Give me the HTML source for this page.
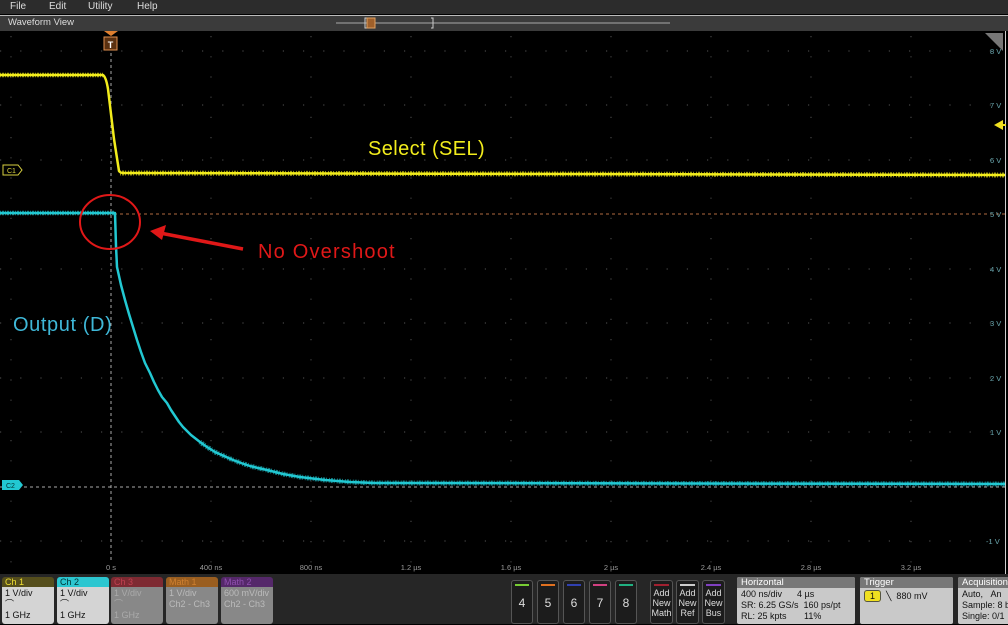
<!DOCTYPE html>
<html><head><meta charset="utf-8"><style>
*{margin:0;padding:0;box-sizing:border-box}
body{width:1008px;height:624px;overflow:hidden;background:#000;font-family:"Liberation Sans",sans-serif;position:relative}
.menu{position:absolute;left:0;top:0;width:1008px;height:14px;background:#2c2c2c;color:#ddd;font-size:10px}
.menu span{position:absolute;top:1px}
.wv{position:absolute;left:0;top:15px;width:1008px;height:16px;background:#3b3b3b;border-top:1px solid #bbb;color:#ddd;font-size:9.5px;padding:1px 8px}
.bot{position:absolute;left:0;top:574px;width:1008px;height:50px;background:#262626}
.ch{position:absolute;top:3px;width:52px;height:47px;border-radius:3px;overflow:hidden;font-size:9px}
.ch .h{height:10px;padding:0 3px;line-height:10px}
.ch .b{height:37px;padding:1px 3px;line-height:11px}
.nb{position:absolute;top:6px;width:22px;height:44px;background:#1c1c1c;border:1px solid #555;border-radius:3px;color:#ddd;font-size:12px;text-align:center;line-height:44px}
.nb i{position:absolute;left:3px;right:3px;top:3px;height:2px}
.ab{position:absolute;top:6px;width:23px;height:44px;background:#1c1c1c;border:1px solid #555;border-radius:3px;color:#ddd;font-size:9px;text-align:center;line-height:10px;padding-top:7px}
.ab i{position:absolute;left:3px;right:3px;top:3px;height:2px}
.pn{position:absolute;top:3px;height:47px;background:#c9c9c9;font-size:9px;color:#111;border-radius:2px;overflow:hidden}
.pn .h{background:#777;color:#fff;height:11px;padding:0 4px;line-height:11px;font-size:9.5px}
</style></head><body>
<div class="menu"><span style="left:10px">File</span><span style="left:49px">Edit</span><span style="left:88px">Utility</span><span style="left:137px">Help</span></div>
<div class="wv">Waveform View</div>
<svg style="position:absolute;left:0;top:15px" width="1008" height="16">
<line x1="336" y1="8" x2="670" y2="8" stroke="#aaa" stroke-width="1"/>
<path d="M367 3h-2v10h2M431 3h2v10h-2" stroke="#ccc" fill="none"/>
<rect x="367" y="3" width="8" height="10" fill="#a0602a" stroke="#e0a060"/>
</svg>
<svg style="position:absolute;left:0;top:31px" width="1008" height="543">
<rect x="0" y="0" width="1008" height="543" fill="#000"/>
<line x1="1005.5" y1="0" x2="1005.5" y2="543" stroke="#ccc"/>
<g stroke="#444" stroke-width="1.2" stroke-dasharray="1.2 19">
<line x1="11" y1="5" x2="11" y2="540"/><line x1="211" y1="5" x2="211" y2="540"/><line x1="311" y1="5" x2="311" y2="540"/><line x1="411" y1="5" x2="411" y2="540"/><line x1="511" y1="5" x2="511" y2="540"/><line x1="611" y1="5" x2="611" y2="540"/><line x1="711" y1="5" x2="711" y2="540"/><line x1="811" y1="5" x2="811" y2="540"/><line x1="911" y1="5" x2="911" y2="540"/>
<line x1="0" y1="20" x2="1005" y2="20"/><line x1="0" y1="74" x2="1005" y2="74"/><line x1="0" y1="129" x2="1005" y2="129"/><line x1="0" y1="238" x2="1005" y2="238"/><line x1="0" y1="292" x2="1005" y2="292"/><line x1="0" y1="347" x2="1005" y2="347"/><line x1="0" y1="401" x2="1005" y2="401"/><line x1="0" y1="510" x2="1005" y2="510"/>
</g>
<line x1="111" y1="10" x2="111" y2="530" stroke="#aaa" stroke-dasharray="3 3"/>
<line x1="0" y1="183" x2="1005" y2="183" stroke="#b06a40" stroke-dasharray="3 3"/>
<line x1="0" y1="456" x2="1005" y2="456" stroke="#aaa" stroke-dasharray="3 3"/>
<path d="M104 0l7 5l7-5z" fill="#e08030"/>
<rect x="104" y="6" width="13" height="13" fill="#5a3010" stroke="#e09050"/>
<text x="110.5" y="17" fill="#fff" font-size="9" text-anchor="middle" font-weight="bold">T</text>
<path d="M985 2h18v18z" fill="#777"/>
<g fill="#6aa8b0" font-size="7.5">
<text x="990" y="23">8 V</text><text x="990" y="77">7 V</text><text x="990" y="132">6 V</text><text x="990" y="186">5 V</text><text x="990" y="241">4 V</text><text x="990" y="295">3 V</text><text x="990" y="350">2 V</text><text x="990" y="404">1 V</text><text x="986" y="513">-1 V</text>
</g>
<path d="M1003 89l-9 5l9 5z" fill="#f0e020"/><line x1="1000" y1="94" x2="1006" y2="94" stroke="#f0e020" stroke-width="2"/>
<g fill="#999" font-size="7.5" text-anchor="middle">
<text x="111" y="539">0 s</text><text x="211" y="539">400 ns</text><text x="311" y="539">800 ns</text><text x="411" y="539">1.2 µs</text><text x="511" y="539">1.6 µs</text><text x="611" y="539">2 µs</text><text x="711" y="539">2.4 µs</text><text x="811" y="539">2.8 µs</text><text x="911" y="539">3.2 µs</text>
</g>
<path d="M0 44L103 44Q106 46 108 58L114 108L119 140Q120 142 124 142L1005 144" stroke="#f2ec1c" stroke-width="2.5" fill="none" stroke-linejoin="round"/>
<path d="M120 142L1005 144" stroke="#f2ec1c" stroke-width="5" fill="none" stroke-dasharray="1 1 2 1 1 2" opacity=".6"/>
<path d="M0 44L103 44" stroke="#f2ec1c" stroke-width="4.5" fill="none" stroke-dasharray="1 1 2 1" opacity=".6"/>
<polyline points="0,182 115,182 116,215 117,236 121,254 125,269 129,283 133,296 137,309 141,321 145,332 150,342 154,351 158,359 162,366 167,372 171,379 175,385 179,391 183,396 191,404 200,411 207,416 215,421 224,425 233,429 241,432 250,435 258,437 267,439 283,443 300,446 325,449 350,451 375,452 400,452 1005,453" stroke="#22c8d2" stroke-width="2.5" fill="none" stroke-linejoin="round"/>
<path d="M0 182L115 182" stroke="#22c8d2" stroke-width="4.5" fill="none" stroke-dasharray="1 1 2 1" opacity=".6"/>
<polyline points="200,411 207,416 215,421 224,425 233,429 241,432 250,435 258,437 267,439 283,443 300,446 325,449 350,451 375,452 400,452 1005,453" stroke="#22c8d2" stroke-width="5" fill="none" stroke-dasharray="1 1 2 1 1 2" opacity=".6"/>
<path d="M3 134h15l4 5l-4 5h-15z" fill="#000" stroke="#d8d040"/>
<text x="7" y="142" fill="#d8d040" font-size="7">C1</text>
<path d="M2 449h17l4 5l-4 5h-17z" fill="#22c8d2"/>
<text x="6" y="457" fill="#033" font-size="7">C2</text>
<ellipse cx="110" cy="191" rx="30" ry="27" fill="none" stroke="#e01818" stroke-width="2"/>
<path d="M243 218L160 202" stroke="#e01818" stroke-width="3.5"/>
<path d="M150 200L166 194L162 209z" fill="#e01818"/>
<text x="258" y="227" fill="#e01818" font-size="20" letter-spacing="1.2">No Overshoot</text>
<text x="368" y="124" fill="#f2ec1c" font-size="20" letter-spacing="0.4">Select (SEL)</text>
<text x="13" y="300" fill="#3fb8d8" font-size="20" letter-spacing="0.6">Output (D)</text>
</svg>
<div class="bot">
<div class="ch" style="left:2px"><div class="h" style="background:#554e1c;color:#f0e030">Ch 1</div><div class="b" style="background:#d4d4d4;color:#111">1 V/div<br>⌒<br>1 GHz</div></div>
<div class="ch" style="left:57px"><div class="h" style="background:#2cc6d0;color:#033">Ch 2</div><div class="b" style="background:#d4d4d4;color:#111">1 V/div<br>⌒<br>1 GHz</div></div>
<div class="ch" style="left:111px"><div class="h" style="background:#7e2a32;color:#c04050">Ch 3</div><div class="b" style="background:#888;color:#aaa">1 V/div<br>⌒<br>1 GHz</div></div>
<div class="ch" style="left:166px"><div class="h" style="background:#9a5e20;color:#d08030">Math 1</div><div class="b" style="background:#888;color:#bbb">1 V/div<br>Ch2 - Ch3</div></div>
<div class="ch" style="left:221px"><div class="h" style="background:#55286a;color:#9050b0">Math 2</div><div class="b" style="background:#888;color:#bbb">600 mV/div<br>Ch2 - Ch3</div></div>
<div class="nb" style="left:511px"><i style="background:#7c3"></i>4</div>
<div class="nb" style="left:537px"><i style="background:#e07020"></i>5</div>
<div class="nb" style="left:563px"><i style="background:#3040b0"></i>6</div>
<div class="nb" style="left:589px"><i style="background:#d04080"></i>7</div>
<div class="nb" style="left:615px"><i style="background:#20b080"></i>8</div>
<div class="ab" style="left:650px"><i style="background:#a02030"></i>Add<br>New<br>Math</div>
<div class="ab" style="left:676px"><i style="background:#ccc"></i>Add<br>New<br>Ref</div>
<div class="ab" style="left:702px"><i style="background:#8040c0"></i>Add<br>New<br>Bus</div>
<div class="pn" style="left:737px;width:118px"><div class="h">Horizontal</div><div style="padding:1px 4px;line-height:11px">400 ns/div&nbsp;&nbsp;&nbsp;&nbsp;&nbsp;&nbsp;4 µs<br>SR: 6.25 GS/s&nbsp;&nbsp;160 ps/pt<br>RL: 25 kpts&nbsp;&nbsp;&nbsp;&nbsp;&nbsp;&nbsp;&nbsp;11%</div></div>
<div class="pn" style="left:860px;width:93px"><div class="h">Trigger</div><div style="padding:3px 4px;font-size:9px"><span style="background:#f0e020;border:1px solid #554;border-radius:3px;padding:0 5px">1</span>&nbsp;&nbsp;╲&nbsp;&nbsp;880 mV</div></div>
<div class="pn" style="left:958px;width:52px"><div class="h">Acquisition</div><div style="padding:1px 4px;line-height:11px;white-space:nowrap">Auto,&nbsp;&nbsp;&nbsp;An<br>Sample: 8 b<br>Single: 0/1</div></div>
</div>
</body></html>
